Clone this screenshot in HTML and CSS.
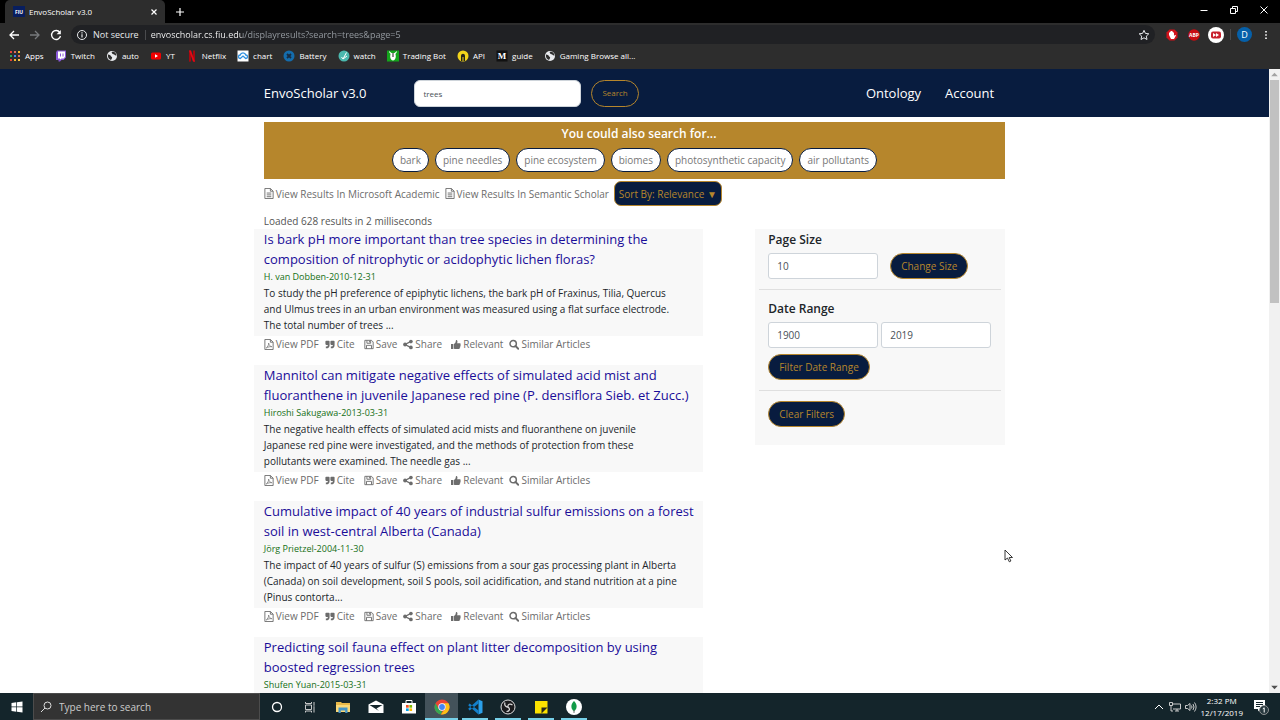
FILE: index.html
```html
<!DOCTYPE html>
<html lang="en">
<head>
    <meta charset="UTF-8">
    <meta name="viewport" content="width=device-width, initial-scale=1.0">
    <title>EnvoScholar v3.0</title>

    <link rel="stylesheet" href="styles.css">
</head>
<body>
    <!-- Icon set -->
    <svg class="sprite" aria-hidden="true">
        <symbol id="i-file" viewBox="0 0 10 12"><path d="M.5.5h6l3 3v8h-9zM6.5.5v3h3M2.5 5.5h5M2.5 7.5h5M2.5 9.5h5" fill="none" stroke="currentColor"/></symbol>
        <symbol id="i-pdf" viewBox="0 0 10 12"><path d="M.5.5h6l3 3v8h-9zM6.5.5v3h3" fill="none" stroke="currentColor"/><path d="M2 9.8C3.600 8.600 4.800 6.500 4.600 4.500c.5 2.300 1.500 3.500 3.500 3.900-2-.2-4 .2-6.100 1.400z" fill="none" stroke="currentColor" stroke-width=".8"/></symbol>
        <symbol id="i-quote" viewBox="0 0 12 12"><path d="M1.500 1.500h3A1 1 0 0 1 5.500 2.500v4a4 4 0 0 1-4 4H1V8.500h.5a2 2 0 0 0 2-2H1.500a1 1 0 0 1-1-1v-3a1 1 0 0 1 1-1zM7.500 1.500h3a1 1 0 0 1 1 1v4a4 4 0 0 1-4 4H7V8.500h.5a2 2 0 0 0 2-2h-2a1 1 0 0 1-1-1v-3a1 1 0 0 1 1-1z" fill="currentColor"/></symbol>
        <symbol id="i-save" viewBox="0 0 12 12"><path d="M1 1h8l2 2v8H1zM3.500 1v3.500h4.500V1M3 11V7h6v4M6.500 1.500v2" fill="none" stroke="currentColor" stroke-width="1.100"/></symbol>
        <symbol id="i-share" viewBox="0 0 12 12"><path d="M9.500 2.300 2.500 6l7 3.700" fill="none" stroke="currentColor" stroke-width="1.500"/><circle cx="9.500" cy="2.500" r="2.200" fill="currentColor"/><circle cx="2.500" cy="6" r="2.300" fill="currentColor"/><circle cx="9.500" cy="9.500" r="2.200" fill="currentColor"/></symbol>
        <symbol id="i-thumb" viewBox="0 0 12 12"><path d="M0 5.500h2.800v6H0zM3.500 5.500C5.500 4.500 5.600 2.800 6 .6c1.700-.2 2.300 1.300 1.300 4h3.200c1.200 0 1.400 1.300.8 1.900.5.600.3 1.400-.3 1.800.300.700 0 1.300-.5 1.600.1 1-.5 1.600-1.600 1.600H6.500c-1.200 0-2-.5-3-.5z" fill="currentColor"/></symbol>
        <symbol id="i-search" viewBox="0 0 12 12"><circle cx="5" cy="5" r="3.800" fill="none" stroke="currentColor" stroke-width="1.800"/><path d="m7.800 7.800 3.300 3.300" stroke="currentColor" stroke-width="2.200" stroke-linecap="round"/></symbol>
        <symbol id="i-globe" viewBox="0 0 12 12"><circle cx="6" cy="6" r="5" fill="#e8eaed"/><path d="M2 4.500c1.500.200 2.500.8 3 1.800s1.500.5 1 2L5 10C3 9.500 1.500 7.500 2 4.500zM5.500 2.200c1 1 .5 2 2 2.100s1 1.500 3 1.200c-.2-2-1.800-3.700-3.500-4z" fill="#2d2d2d"/></symbol>
    </svg>

    <!-- Browser window -->
    <header class="browser">
        <div class="tab-strip">
            <div class="tab">
                <svg class="fav" viewBox="0 0 12 12"><rect width="12" height="11" fill="#081e5f"/><text x="6" y="8" class="fiu">FIU</text></svg>
                <span class="tab-title">EnvoScholar v3.0</span>
                <button class="glyph" aria-label="Close tab"><svg viewBox="0 0 8 8"><path d="m1.500 1.500 5 5m0-5-5 5" stroke="#fff" stroke-width="1.200"/></svg></button>
            </div>
            <button class="glyph new-tab" aria-label="New tab"><svg viewBox="0 0 8 8"><path d="M4 0v8M0 4h8" stroke="#fff" stroke-width="1.200"/></svg></button>
            <div class="window-controls">
                <button class="glyph" aria-label="Minimize"><svg viewBox="0 0 8 8"><path d="M.5 4.500h7" stroke="#fff"/></svg></button>
                <button class="glyph" aria-label="Restore"><svg viewBox="0 0 8 8"><path d="M.5 2.500h5v5h-5zM2.500 2V.5h5v5H6" fill="none" stroke="#fff"/></svg></button>
                <button class="glyph" aria-label="Close"><svg viewBox="0 0 8 8"><path d="m.5.5 7 7m0-7-7 7" stroke="#fff"/></svg></button>
            </div>
        </div>
        <div class="toolbar">
            <button class="tool" aria-label="Back"><svg viewBox="0 0 12 12"><path d="M11 6H2m4-4L2 6l4 4" fill="none" stroke="#fff" stroke-width="1.300"/></svg></button>
            <button class="tool" aria-label="Forward"><svg viewBox="0 0 12 12"><path d="M1 6h9M6 2l4 4-4 4" fill="none" stroke="#77797c" stroke-width="1.300"/></svg></button>
            <button class="tool" aria-label="Reload"><svg viewBox="0 0 12 12"><path d="M9.800 3.400A4.500 4.500 0 1 0 10.500 7" fill="none" stroke="#fff" stroke-width="1.300"/><path d="M10.800 1v4.200H6.600z" fill="#fff"/></svg></button>
            <div class="omnibox">
                <svg viewBox="0 0 12 12"><circle cx="6" cy="6" r="4.500" fill="none" stroke="#e8eaed"/><path d="M6 5.300v3.200M6 3.300v1.200" stroke="#e8eaed" stroke-width="1.200"/></svg>
                <label for="url">Not secure</label>
                <input id="url" class="url" type="text" value="envoscholar.cs.fiu.edu/displayresults?search=trees&amp;page=5">
                <svg viewBox="0 0 12 12"><path d="m6 1.300 1.400 3.100 3.400.4-2.500 2.300.7 3.400-3-1.700-3 1.700.7-3.400L1.200 4.800l3.400-.4z" fill="none" stroke="#e8eaed"/></svg>
            </div>
            <div class="extensions">
                <svg class="ext" viewBox="0 0 16 16"><path d="M5.500 2.500h5l3 3v5l-3 3h-5l-3-3v-5z" fill="#d0121b"/><path d="M5 8V5.500h1v-1h1V4h1v.5h1v1h1V9l1-1.200 1 .6L10 12H7z" fill="#fff"/></svg>
                <svg class="ext" viewBox="0 0 16 16"><circle cx="8" cy="8" r="5.800" fill="#c70d12"/><text x="8" y="10" class="abp">ABP</text></svg>
                <svg class="ext" viewBox="0 0 16 16"><circle cx="8" cy="8" r="8" fill="#fff"/><rect x="3" y="4.500" width="10" height="7" rx="2" fill="#c8202c"/><path d="m5 6 3 2-3 2zm3 0 3 2-3 2z" fill="#fff"/></svg>
                <span class="divider"></span>
                <span class="avatar">D</span>
                <button class="tool" aria-label="Menu"><svg viewBox="0 0 12 12"><path d="M5.200 2h1.600v1.600H5.200zm0 3.200h1.600v1.600H5.200zm0 3.200h1.600V10H5.200z" fill="#fff"/></svg></button>
            </div>
        </div>
        <nav class="bookmarks">
            <a href="#"><svg viewBox="0 0 12 12"><path d="M1 1h2v2H1zm0 8h2v2H1z" fill="#ea4335"/><path d="M5 1h2v2H5zm4 4h2v2H9z" fill="#e06c5c"/><path d="M9 1h2v2H9zM5 9h2v2H5z" fill="#f4b92c"/><path d="M1 5h2v2H1z" fill="#34a853"/><path d="M5 5h2v2H5z" fill="#4285f4"/><path d="M9 9h2v2H9z" fill="#f7c948"/></svg>Apps</a>
            <a href="#"><svg viewBox="0 0 12 12"><path d="M2 .5h9v7L8.500 10H6.500L5 11.500H3.500V10H1V2.500z" fill="#8957d8"/><path d="M3 1.500h7V7L8.500 8.500h-2L5 9.500v-1H3z" fill="#fff"/><path d="M5.500 3.500v3M8 3.500v3" stroke="#8957d8"/></svg>Twitch</a>
            <a href="#"><svg><use href="#i-globe"/></svg>auto</a>
            <a href="#"><svg viewBox="0 0 12 12"><rect x="1" y="2.500" width="10" height="7" rx="1.500" fill="#f00000"/><path d="m5 4.200 3 1.800-3 1.800z" fill="#fff"/></svg>YT</a>
            <a href="#"><svg viewBox="0 0 12 12"><path d="M3 .5h2V11.500l-2 .3zM7 .5h2v11.300L7 11.500z" fill="#a50910"/><path d="M3 .5h2l4 11.300-2-.3z" fill="#e50914"/></svg>Netflix</a>
            <a href="#"><svg viewBox="0 0 12 12"><rect x=".5" y=".5" width="11" height="11" fill="#fff"/><path d="M3.200 8.500a1.700 1.700 0 0 1 0-3.500 2.900 2.900 0 0 1 5.600 0 1.700 1.700 0 0 1 0 3.500L6 6z" fill="none" stroke="#2d8fe0" stroke-width="1.300"/></svg>chart</a>
            <a href="#"><svg viewBox="0 0 12 12"><circle cx="6" cy="6" r="5.500" fill="#146cac"/><path d="m4 4 4 4m0-4L4 8" stroke="#162b42" stroke-width="1.800"/></svg>Battery</a>
            <a href="#"><svg viewBox="0 0 12 12"><circle cx="6" cy="6" r="5.500" fill="#4bb8ae"/><path d="m3.500 7 1.500 2 3.500-6.500M5 9l4-3" fill="none" stroke="#fff"/></svg>watch</a>
            <a href="#"><svg viewBox="0 0 12 12"><rect y=".5" width="12" height="11" fill="#14a51c"/><path d="M2 1c0 2 1.500 2 1.500 3.500C2.500 7 4 10.500 6 10.500S9.500 7 8.500 4.500C8.500 3 10 3 10 1L7.500 3h-3z" fill="#fff"/><path d="M6 3v4" stroke="#1a1a1a"/></svg>Trading Bot</a>
            <a href="#"><svg viewBox="0 0 12 12"><circle cx="6" cy="6" r="5.500" fill="#f3d51b"/><path d="M4 11V6c0-3 4-3 4 0v5H6.500V7h-1v4z" fill="#26261c"/></svg>API</a>
            <a href="#"><svg viewBox="0 0 12 12"><rect x=".5" y=".5" width="11" height="11" fill="#111"/><text x="6" y="9" class="medium">M</text></svg>guide</a>
            <a href="#"><svg><use href="#i-globe"/></svg>Gaming Browse all...</a>
        </nav>
    </header>

    <div class="viewport">
        <div class="page">
            <nav class="navbar">
                <div class="container nav-inner">
                    <a class="brand" href="#">EnvoScholar v3.0</a>
                    <form class="nav-search">
                        <input type="text" value="trees" aria-label="Search">
                        <button class="btn-outline" type="button">Search</button>
                    </form>
                    <div class="nav-links">
                        <a href="#">Ontology</a>
                        <a href="#">Account</a>
                    </div>
                </div>
            </nav>

            <main class="container content">
                <section class="suggestions">
                    <h2>You could also search for...</h2>
                    <div class="chips">
                        <a href="#">bark</a>
                        <a href="#">pine needles</a>
                        <a href="#">pine ecosystem</a>
                        <a href="#">biomes</a>
                        <a href="#">photosynthetic capacity</a>
                        <a href="#">air pollutants</a>
                    </div>
                </section>

                <div class="options">
                    <a href="#"><svg><use href="#i-file"/></svg>View Results In Microsoft Academic</a>
                    <a href="#"><svg><use href="#i-file"/></svg>View Results In Semantic Scholar</a>
                    <select aria-label="Sort by">
                        <option>Sort By: Relevance ▼</option>
                    </select>
                </div>

                <p class="loaded">Loaded 628 results in 2 milliseconds</p>

                <div class="columns">
                    <div class="results">
                        <article>
                            <div class="result-body">
                                <h3><a href="#">Is bark pH more important than tree species in determining the<br>composition of nitrophytic or acidophytic lichen floras?</a></h3>
                                <p class="author">H. van Dobben-2010-12-31</p>
                                <p class="abstract">To study the pH preference of epiphytic lichens, the bark pH of Fraxinus, Tilia, Quercus<br>and Ulmus trees in an urban environment was measured using a flat surface electrode.<br>The total number of trees ...</p>
                            </div>
                            <div class="actions">
                                <a href="#"><svg><use href="#i-pdf"/></svg>View PDF</a>
                                <a href="#" class="wide"><svg><use href="#i-quote"/></svg>Cite</a>
                                <a href="#"><svg><use href="#i-save"/></svg>Save</a>
                                <a href="#" class="wide"><svg><use href="#i-share"/></svg>Share</a>
                                <a href="#"><svg><use href="#i-thumb"/></svg>Relevant</a>
                                <a href="#"><svg><use href="#i-search"/></svg>Similar Articles</a>
                            </div>
                        </article>
                        <article>
                            <div class="result-body">
                                <h3><a href="#">Mannitol can mitigate negative effects of simulated acid mist and<br>fluoranthene in juvenile Japanese red pine (P. densiflora Sieb. et Zucc.)</a></h3>
                                <p class="author">Hiroshi Sakugawa-2013-03-31</p>
                                <p class="abstract">The negative health effects of simulated acid mists and fluoranthene on juvenile<br>Japanese red pine were investigated, and the methods of protection from these<br>pollutants were examined. The needle gas ...</p>
                            </div>
                            <div class="actions">
                                <a href="#"><svg><use href="#i-pdf"/></svg>View PDF</a>
                                <a href="#" class="wide"><svg><use href="#i-quote"/></svg>Cite</a>
                                <a href="#"><svg><use href="#i-save"/></svg>Save</a>
                                <a href="#" class="wide"><svg><use href="#i-share"/></svg>Share</a>
                                <a href="#"><svg><use href="#i-thumb"/></svg>Relevant</a>
                                <a href="#"><svg><use href="#i-search"/></svg>Similar Articles</a>
                            </div>
                        </article>
                        <article>
                            <div class="result-body">
                                <h3><a href="#">Cumulative impact of 40 years of industrial sulfur emissions on a forest<br>soil in west-central Alberta (Canada)</a></h3>
                                <p class="author">Jörg Prietzel-2004-11-30</p>
                                <p class="abstract">The impact of 40 years of sulfur (S) emissions from a sour gas processing plant in Alberta<br>(Canada) on soil development, soil S pools, soil acidification, and stand nutrition at a pine<br>(Pinus contorta...</p>
                            </div>
                            <div class="actions">
                                <a href="#"><svg><use href="#i-pdf"/></svg>View PDF</a>
                                <a href="#" class="wide"><svg><use href="#i-quote"/></svg>Cite</a>
                                <a href="#"><svg><use href="#i-save"/></svg>Save</a>
                                <a href="#" class="wide"><svg><use href="#i-share"/></svg>Share</a>
                                <a href="#"><svg><use href="#i-thumb"/></svg>Relevant</a>
                                <a href="#"><svg><use href="#i-search"/></svg>Similar Articles</a>
                            </div>
                        </article>
                        <article>
                            <div class="result-body">
                                <h3><a href="#">Predicting soil fauna effect on plant litter decomposition by using<br>boosted regression trees</a></h3>
                                <p class="author">Shufen Yuan-2015-03-31</p>
                            </div>
                        </article>
                    </div>

                    <aside class="filters">
                        <form class="filter-group">
                            <label for="pageSize">Page Size</label>
                            <div class="fields spread">
                                <input id="pageSize" type="text" value="10">
                                <button class="btn" type="button">Change Size</button>
                            </div>
                        </form>
                        <form class="filter-group">
                            <label for="fromYear">Date Range</label>
                            <div class="fields">
                                <input id="fromYear" type="text" value="1900">
                                <input type="text" value="2019" aria-label="To year">
                            </div>
                            <button class="btn" type="button">Filter Date Range</button>
                        </form>
                        <div class="filter-group">
                            <button class="btn" type="button">Clear Filters</button>
                        </div>
                    </aside>
                </div>
            </main>
        </div>
        <div class="scrollbar">
            <svg viewBox="0 0 10 10"><path d="m2 6.500 3-3 3 3z" fill="#a3a3a3"/></svg>
            <div class="thumb"></div>
            <svg viewBox="0 0 10 10"><path d="m2 3.500 3 3 3-3z" fill="#505050"/></svg>
        </div>
    </div>

    <!-- Windows taskbar -->
    <footer class="taskbar">
        <button class="task start" aria-label="Start"><svg viewBox="0 0 12 12"><path d="m.5 2 4.800-.7v4.300H.5zm5.500-.8L11.500.4v5.200H6zM.5 6.300h4.800v4.400L.5 10zM6 6.300h5.500v5.300L6 10.800z" fill="#fff"/></svg></button>
        <div class="task-search">
            <svg viewBox="0 0 12 12"><circle cx="7.500" cy="4.500" r="3.500" fill="none" stroke="#ddd"/><path d="m5 7-4 4" stroke="#ddd"/></svg>
            <input type="text" placeholder="Type here to search" aria-label="Type here to search">
        </div>
        <button class="task" aria-label="Cortana"><svg viewBox="0 0 12 12"><circle cx="6" cy="6" r="4.500" fill="none" stroke="#fff" stroke-width="1.300"/></svg></button>
        <button class="task" aria-label="Task view"><svg viewBox="0 0 12 12"><path d="M1.500 4h6v4.500h-6zM1.500 2.500V1M7.500 2.500V1M1.500 2.500h6M1.500 10v1.500M7.500 10v1.500M1.500 10h6M10 1v3M10 6v5.500M9.200 5h1.600" fill="none" stroke="#ddd" stroke-width=".9"/></svg></button>
        <button class="task" aria-label="File Explorer"><svg class="big" viewBox="0 0 16 16"><path d="M1 3h5l1 1h8v9H1z" fill="#e9b949"/><path d="M1 6h14v7H1z" fill="#fbd978"/><path d="M3.500 8.500h9V14h-2.300v-2.500H5.800V14H3.500z" fill="#4696c8"/></svg></button>
        <button class="task" aria-label="Mail"><svg class="big" viewBox="0 0 16 16"><path d="M.5 5.500 8 1.500l7.500 4V14H.5z" fill="#fff"/><path d="M1.500 6h13L8.500 9.500 11 12 1.500 6z" fill="#14252b"/></svg></button>
        <button class="task" aria-label="Store"><svg class="big" viewBox="0 0 16 16"><path d="M1 4h14v10.500H1z" fill="#fff"/><path d="M5 4V1.500h6V4" fill="none" stroke="#fff"/><path d="M5 6h2.700v2.700H5z" fill="#f25022"/><path d="M8.400 6h2.700v2.700H8.400z" fill="#7fba00"/><path d="M5 9.400h2.700V12H5z" fill="#00a4ef"/><path d="M8.400 9.400h2.700V12H8.400z" fill="#ffb900"/></svg></button>
        <button class="task open active" aria-label="Chrome"><svg class="big" viewBox="0 0 16 16"><circle cx="8" cy="8" r="7.500" fill="#ea4335"/><path d="M1.500 4.250 4.750 9.900A3.700 3.700 0 0 0 8.500 11.700L6.800 15.400A7.500 7.500 0 0 1 1.500 4.250z" fill="#34a853"/><path d="M8 4.300h6.500A7.500 7.500 0 0 1 6.800 15.400L11.200 9.900A3.700 3.700 0 0 0 8 4.300z" fill="#fbc116"/><circle cx="8" cy="8" r="3.700" fill="#fff"/><circle cx="8" cy="8" r="2.900" fill="#4285f4"/></svg></button>
        <button class="task open" aria-label="Visual Studio Code"><svg class="big" viewBox="0 0 16 16"><path d="M11.500.5 15.500 2.300v11.400l-4 1.800z" fill="#2ba0ea"/><path d="M11.500.5 1.200 9.800l1.400 1.600 9-6.900zM11.500 15.500 1.200 6.200l1.400-1.600 9 6.900z" fill="#1380cc"/></svg></button>
        <button class="task open" aria-label="OBS Studio"><svg class="big" viewBox="0 0 16 16"><circle cx="8" cy="8" r="7" fill="#1b1b1d" stroke="#ddd"/><path d="M5 3.500c-1 3 1 4.800 3 4.500M12.500 6c-2.500-2-5-.5-4.500 2M6.500 12.500c3 0 4-2.500 1.500-4.500" fill="none" stroke="#ddd" stroke-width="1.200"/></svg></button>
        <button class="task open" aria-label="Sticky Notes"><svg class="big" viewBox="0 0 16 16"><path d="M2 2h12.500v12.500H2z" fill="#fde300"/><path d="M8.500 14.500v-6h6z" fill="#2a2a1c"/></svg></button>
        <button class="task open" aria-label="MongoDB Compass"><svg class="big" viewBox="0 0 16 16"><circle cx="8" cy="8" r="8" fill="#fff"/><path d="M8 2c4 4 3 8 0 10.500C5 10 4 6 8 2z" fill="#129b48"/><path d="M8 11v3" stroke="#777"/></svg></button>
        <div class="tray">
            <svg viewBox="0 0 12 12"><path d="m2 8 4-4 4 4" fill="none" stroke="#fff"/></svg>
            <svg viewBox="0 0 12 12"><path d="M4 3h7.500v5H4M6 10h4M8 8v2M.5 1.500h3v3h-3zM2 4.500V10h2" fill="none" stroke="#ddd" stroke-width=".9"/></svg>
            <svg viewBox="0 0 12 12"><path d="M.5 4.500h2l2.500-2v7l-2.500-2h-2zM6.500 4.500q1 1.500 0 3M8 3q2 3 0 6M9.500 1.500q3.200 4.500 0 9" fill="none" stroke="#ddd" stroke-width=".9"/></svg>
            <div class="clock"><span>2:32 PM</span><span>12/17/2019</span></div>
            <svg class="big" viewBox="0 0 16 16"><path d="M1 1h11v9H7l-2 2.500V10H1z" fill="#fff"/><path d="M3 3.500h7M3 5.500h7M3 7.500h4" stroke="#14252b"/><circle cx="11" cy="11" r="4.500" fill="#27383e" stroke="#aaa" stroke-width=".8"/><path d="m9.800 9.800 1.400-1V13.500" fill="none" stroke="#fff"/></svg>
        </div>
    </footer>

    <!-- Mouse pointer -->
    <svg class="pointer" viewBox="0 0 10 14"><path d="M1 1v10l2.500-2 1.800 3.800 1.600-.8L5.200 8.500h3.300z" fill="#fff" stroke="#222" stroke-width=".9"/></svg>
</body>
</html>
```
FILE: styles.css
```css
* {
    box-sizing: border-box;
}

body {
    margin: 0;
    height: 100vh;
    display: flex;
    flex-direction: column;
    overflow: hidden;
    font-family: "Open Sans", "Noto Sans", sans-serif;
    font-size: 10px;
    line-height: 16px;
    background: #fff;
    color: #212529;
}

a {
    color: inherit;
    text-decoration: none;
}

button, input, select {
    font: inherit;
    margin: 0;
}

h2, h3, p {
    margin: 0;
    font-weight: 400;
}

svg {
    width: 12px;
    height: 12px;
    flex: none;
}

.sprite {
    position: absolute;
    width: 0;
    height: 0;
}

/* Browser */
.browser {
    flex: none;
    background: #2d2d2d;
    color: #fff;
    font-size: 9px;
}

.tab-strip {
    display: flex;
    align-items: center;
    height: 23px;
    padding-left: 5px;
    background: #000;
}

.tab {
    display: flex;
    align-items: center;
    gap: 4px;
    width: 160px;
    height: 23px;
    padding: 0 7px 0 8px;
    border-radius: 5px 5px 0 0;
    background: #2d2d2d;
}

.tab-title {
    flex: 1;
    font-size: 8px;
}

.fiu {
    font-size: 5px;
    font-weight: 700;
    fill: #fff;
    text-anchor: middle;
}

.glyph, .tool {
    display: flex;
    padding: 0;
    border: 0;
    background: none;
}

.glyph svg {
    width: 8px;
    height: 8px;
}

.new-tab {
    margin-left: 11px;
}

.window-controls {
    display: flex;
    gap: 22px;
    margin-left: auto;
    padding: 0 12px 4px 0;
}

.toolbar {
    display: flex;
    align-items: center;
    gap: 9px;
    height: 23px;
    padding: 0 8px;
}

.omnibox {
    flex: 1;
    display: flex;
    align-items: center;
    gap: 5px;
    height: 19px;
    padding: 0 5px;
    border-radius: 10px;
    background: #202124;
    color: #e8eaed;
}

.omnibox label {
    padding-right: 6px;
    border-right: 1px solid #4a4b4e;
    line-height: 10px;
}

/* The host is brighter than the rest of the address */
.url {
    flex: 1;
    padding: 0;
    border: 0;
    outline: 0;
    color: transparent;
    background: linear-gradient(90deg, #fff 91px, #9aa0a6 91px);
    -webkit-background-clip: text;
    background-clip: text;
}

.extensions {
    display: flex;
    align-items: center;
    gap: 6px;
}

.ext {
    width: 16px;
    height: 16px;
}

.abp {
    font-size: 5px;
    font-weight: 700;
    fill: #fff;
    text-anchor: middle;
}

.divider {
    width: 1px;
    height: 11px;
    background: #4a4b4e;
}

.avatar {
    width: 15px;
    height: 15px;
    margin-right: 2px;
    border-radius: 50%;
    background: #0660a9;
    line-height: 15px;
    text-align: center;
}

.bookmarks {
    display: flex;
    align-items: center;
    gap: 11px;
    height: 23px;
    padding: 0 9px 3px;
    font-size: 8px;
}

.bookmarks a {
    display: flex;
    align-items: center;
    gap: 4px;
    white-space: nowrap;
}

.medium {
    font: 700 9px "Liberation Serif", serif;
    fill: #fff;
    text-anchor: middle;
}

/* Page */
.viewport {
    flex: 1;
    min-height: 0;
    display: flex;
}

.page {
    flex: 1;
    overflow: hidden;
}

.container {
    width: 60%;
    min-width: 740px;
    margin: 0 auto;
    padding: 0 10px;
}

.navbar {
    background: #081c3f;
    color: #fff;
    font-size: 13px;
}

.nav-inner {
    display: flex;
    align-items: center;
    height: 48px;
}

.nav-search {
    display: flex;
    gap: 10px;
    margin-left: 48px;
    font-size: 8px;
}

.nav-search input {
    width: 167px;
    height: 27px;
    padding: 0 8px;
    border: 1px solid #ced4da;
    border-radius: 6px;
    color: #495057;
}

.btn-outline {
    height: 27px;
    padding: 0 10px;
    border: 1px solid #b6862c;
    border-radius: 14px;
    background: none;
    color: #b6862c;
}

.nav-links {
    display: flex;
    gap: 24px;
    margin-left: auto;
    padding-right: 11px;
}

.content {
    padding-top: 5px;
}

.suggestions {
    height: 57px;
    padding-top: 4px;
    background: #b6862c;
}

.suggestions h2 {
    padding-left: 9px;
    font-size: 12px;
    font-weight: 600;
    color: #fff;
    text-align: center;
}

.chips {
    display: flex;
    justify-content: center;
    gap: 6px;
    margin-top: 6px;
}

.chips a {
    height: 24px;
    padding: 0 7px;
    border: 1px solid #081c3f;
    border-radius: 12px;
    background: #fff;
    color: #777;
    line-height: 22px;
}

.options {
    display: flex;
    align-items: center;
    gap: 5px;
    margin-top: 2px;
    color: #6c6c6c;
}

.options a, .actions a {
    display: flex;
    align-items: center;
    gap: 2px;
    white-space: nowrap;
}

.options svg, .actions svg {
    width: 10px;
    height: 11px;
}

.options select {
    height: 25px;
    padding: 0 4px;
    border: 1px solid #b6862c;
    border-radius: 7px;
    background: #081c3f;
    color: #b6862c;
    appearance: none;
}

.loaded {
    margin-top: 7px;
    color: #555;
}

.columns {
    display: flex;
    justify-content: space-between;
    align-items: flex-start;
}

.results {
    width: 449px;
    margin-left: -10px;
}

.result-body {
    padding: 0 10px 3px;
    background: #f8f8f8;
    white-space: nowrap;
}

.result-body h3 {
    font-size: 13px;
    line-height: 20px;
    color: #1a0d98;
}

.author {
    font-size: 9px;
    color: #156f15;
}

.actions {
    display: flex;
    gap: 6px;
    margin-bottom: 13px;
    padding: 0 10px;
    color: #6c6c6c;
}

.actions .wide {
    padding-right: 3px;
}

.filters {
    width: 250px;
    height: 216px;
    padding: 0 4px;
    background: #f8f8f8;
}

.filter-group {
    padding: 10px 9px;
    border-bottom: 1px solid #dfdfdf;
}

.filter-group:first-child {
    padding-top: 2px;
}

.filter-group:last-child {
    border-bottom: 0;
}

.filter-group label {
    display: block;
    margin-bottom: 4px;
    font-size: 12px;
    font-weight: 600;
    line-height: 18px;
}

.fields {
    display: flex;
    gap: 3px;
}

.spread {
    gap: 12px;
}

.fields input {
    width: 110px;
    height: 26px;
    padding: 0 8px;
    border: 1px solid #ced4da;
    border-radius: 3px;
    color: #495057;
}

.btn {
    height: 26px;
    padding: 0 10px;
    border: 1px solid #b6862c;
    border-radius: 13px;
    background: #081c3f;
    color: #b6862c;
}

.fields + .btn {
    margin-top: 6px;
}

.scrollbar {
    display: flex;
    flex-direction: column;
    width: 11px;
    background: #f1f1f1;
}

.scrollbar svg {
    width: 11px;
    height: 11px;
}

.thumb {
    height: 223px;
    margin: 0 1px auto;
    background: #c1c1c1;
}

/* Taskbar */
.taskbar {
    flex: none;
    display: flex;
    height: 27px;
    background: #14252b;
    color: #fff;
}

.task {
    display: flex;
    align-items: center;
    justify-content: center;
    width: 33px;
    padding: 0;
    border: 0;
    background: none;
}

.big {
    width: 16px;
    height: 16px;
}

.open {
    background: linear-gradient(#76d0e8, #76d0e8) bottom / 26px 2px no-repeat;
}

.active {
    background-color: #43525a;
    background-size: 100% 2px;
}

.task-search {
    display: flex;
    align-items: center;
    gap: 7px;
    width: 227px;
    padding: 0 6px;
    border: 1px solid #4c4c4c;
    background: #333;
}

.task-search input {
    flex: 1;
    padding: 0;
    border: 0;
    background: none;
    color: #ddd;
}

.task-search input::placeholder {
    color: #ccc;
}

.tray {
    display: flex;
    align-items: center;
    gap: 4px;
    margin-left: auto;
    padding-right: 11px;
}

.clock {
    display: flex;
    flex-direction: column;
    margin-right: 6px;
    font-size: 8px;
    line-height: 12px;
    text-align: center;
}

.pointer {
    position: absolute;
    left: 1004px;
    top: 549px;
    width: 10px;
    height: 14px;
}
```
